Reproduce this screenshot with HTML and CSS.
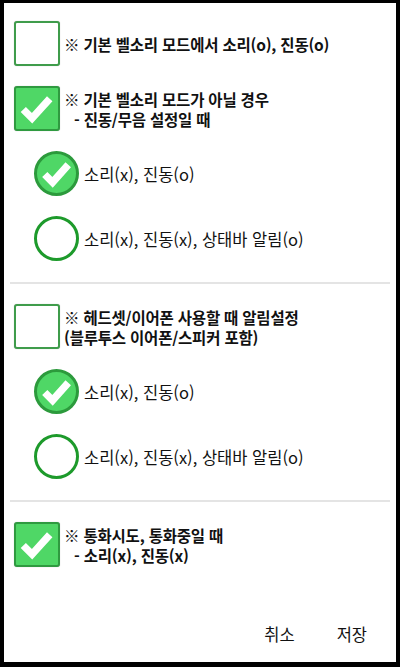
FILE: index.html
```html
<!DOCTYPE html>
<html lang="ko">
<head>
    <meta charset="UTF-8">
    <meta name="viewport" content="width=device-width, initial-scale=1.0">
    <title>알림 설정</title>
    <link rel="stylesheet" href="styles.css">
</head>
<body>
    <div class="dialog">
        <!-- 기본 벨소리 -->
        <div class="section">
            <div class="option">
                <span class="box"></span>
                <span class="title">※ 기본 벨소리 모드에서 소리(o), 진동(o)</span>
            </div>
            <div class="option">
                <span class="box checked">
                    <svg viewBox="0 0 46 46"><path d="M9 24 L18 33 L36 13" /></svg>
                </span>
                <span class="title">※ 기본 벨소리 모드가 아닐 경우<br><span class="sub">- 진동/무음 설정일 때</span></span>
            </div>
            <div class="option sub-option">
                <span class="radio checked">
                    <svg viewBox="0 0 46 46"><path d="M11 24 L19 32 L35 14" /></svg>
                </span>
                <span class="text">소리(x), 진동(o)</span>
            </div>
            <div class="option sub-option">
                <span class="radio"></span>
                <span class="text">소리(x), 진동(x), 상태바 알림(o)</span>
            </div>
        </div>

        <hr class="divider">

        <!-- 헤드셋 -->
        <div class="section">
            <div class="option">
                <span class="box"></span>
                <span class="title">※ 헤드셋/이어폰 사용할 때 알림설정<br>(블루투스 이어폰/스피커 포함)</span>
            </div>
            <div class="option sub-option">
                <span class="radio checked">
                    <svg viewBox="0 0 46 46"><path d="M11 24 L19 32 L35 14" /></svg>
                </span>
                <span class="text">소리(x), 진동(o)</span>
            </div>
            <div class="option sub-option">
                <span class="radio"></span>
                <span class="text">소리(x), 진동(x), 상태바 알림(o)</span>
            </div>
        </div>

        <hr class="divider">

        <!-- 통화 -->
        <div class="section">
            <div class="option">
                <span class="box checked">
                    <svg viewBox="0 0 46 46"><path d="M9 24 L18 33 L36 13" /></svg>
                </span>
                <span class="title">※ 통화시도, 통화중일 때<br><span class="sub">- 소리(x), 진동(x)</span></span>
            </div>
        </div>

        <div class="actions">
            <button>취소</button>
            <button>저장</button>
        </div>
    </div>
</body>
</html>
```

FILE: styles.css
```css
* {
    box-sizing: border-box;
    margin: 0;
    padding: 0;
    font-family: "Noto Sans CJK KR", "Noto Sans", sans-serif;
}
body {
    background: #000;
    width: 400px;
    height: 667px;
    padding: 3px 4px 5px;
}
.dialog {
    background: #fff;
    height: 659px;
    display: flex;
    flex-direction: column;
    color: #111;
}
.section {
    display: flex;
    flex-direction: column;
    gap: 20px;
    padding: 18px 10px 21px;
}
.section + .divider + .section {
    padding-top: 20px;
}
.divider {
    border: none;
    height: 2px;
    background: #e4e4e4;
    margin: 0 6px;
}
.option {
    display: flex;
    align-items: center;
    height: 45px;
}
.sub-option {
    padding-left: 20px;
}
.box {
    width: 46px;
    height: 45px;
    flex-shrink: 0;
    border: 2px solid #3f9c4b;
    border-radius: 3px;
    background: #fff;
    box-shadow: 0 0 1px rgba(0, 0, 0, 0.3);
    margin-right: 4px;
}
.box.checked {
    background: #4fd766;
    border-color: #2f9a40;
}
.radio {
    width: 45px;
    height: 45px;
    flex-shrink: 0;
    border: 3px solid #1d9a2b;
    border-radius: 50%;
    background: #fff;
    margin-right: 5px;
}
.radio.checked {
    background: #4fd766;
    border-color: #2c9a3c;
}
.box svg {
    display: block;
    margin: -2px;
    width: calc(100% + 4px);
    height: calc(100% + 4px);
}
.radio svg {
    display: block;
    margin: -3px;
    width: calc(100% + 6px);
    height: calc(100% + 6px);
}
svg path {
    fill: none;
    stroke: #fff;
    stroke-width: 7.5;
    stroke-linejoin: miter;
}
.title {
    font-size: 15.5px;
    font-weight: bold;
    line-height: 20px;
    letter-spacing: -0.2px;
}
.sub {
    padding-left: 10px;
}
.text {
    font-size: 16.5px;
    line-height: 20px;
}
.actions {
    margin-top: auto;
    display: flex;
    justify-content: flex-end;
    gap: 10px;
    padding: 0 13px 14px;
}
.actions button {
    background: none;
    border: none;
    font-size: 16.5px;
    color: #111;
    padding: 4px 16px;
    line-height: 20px;
}
```
